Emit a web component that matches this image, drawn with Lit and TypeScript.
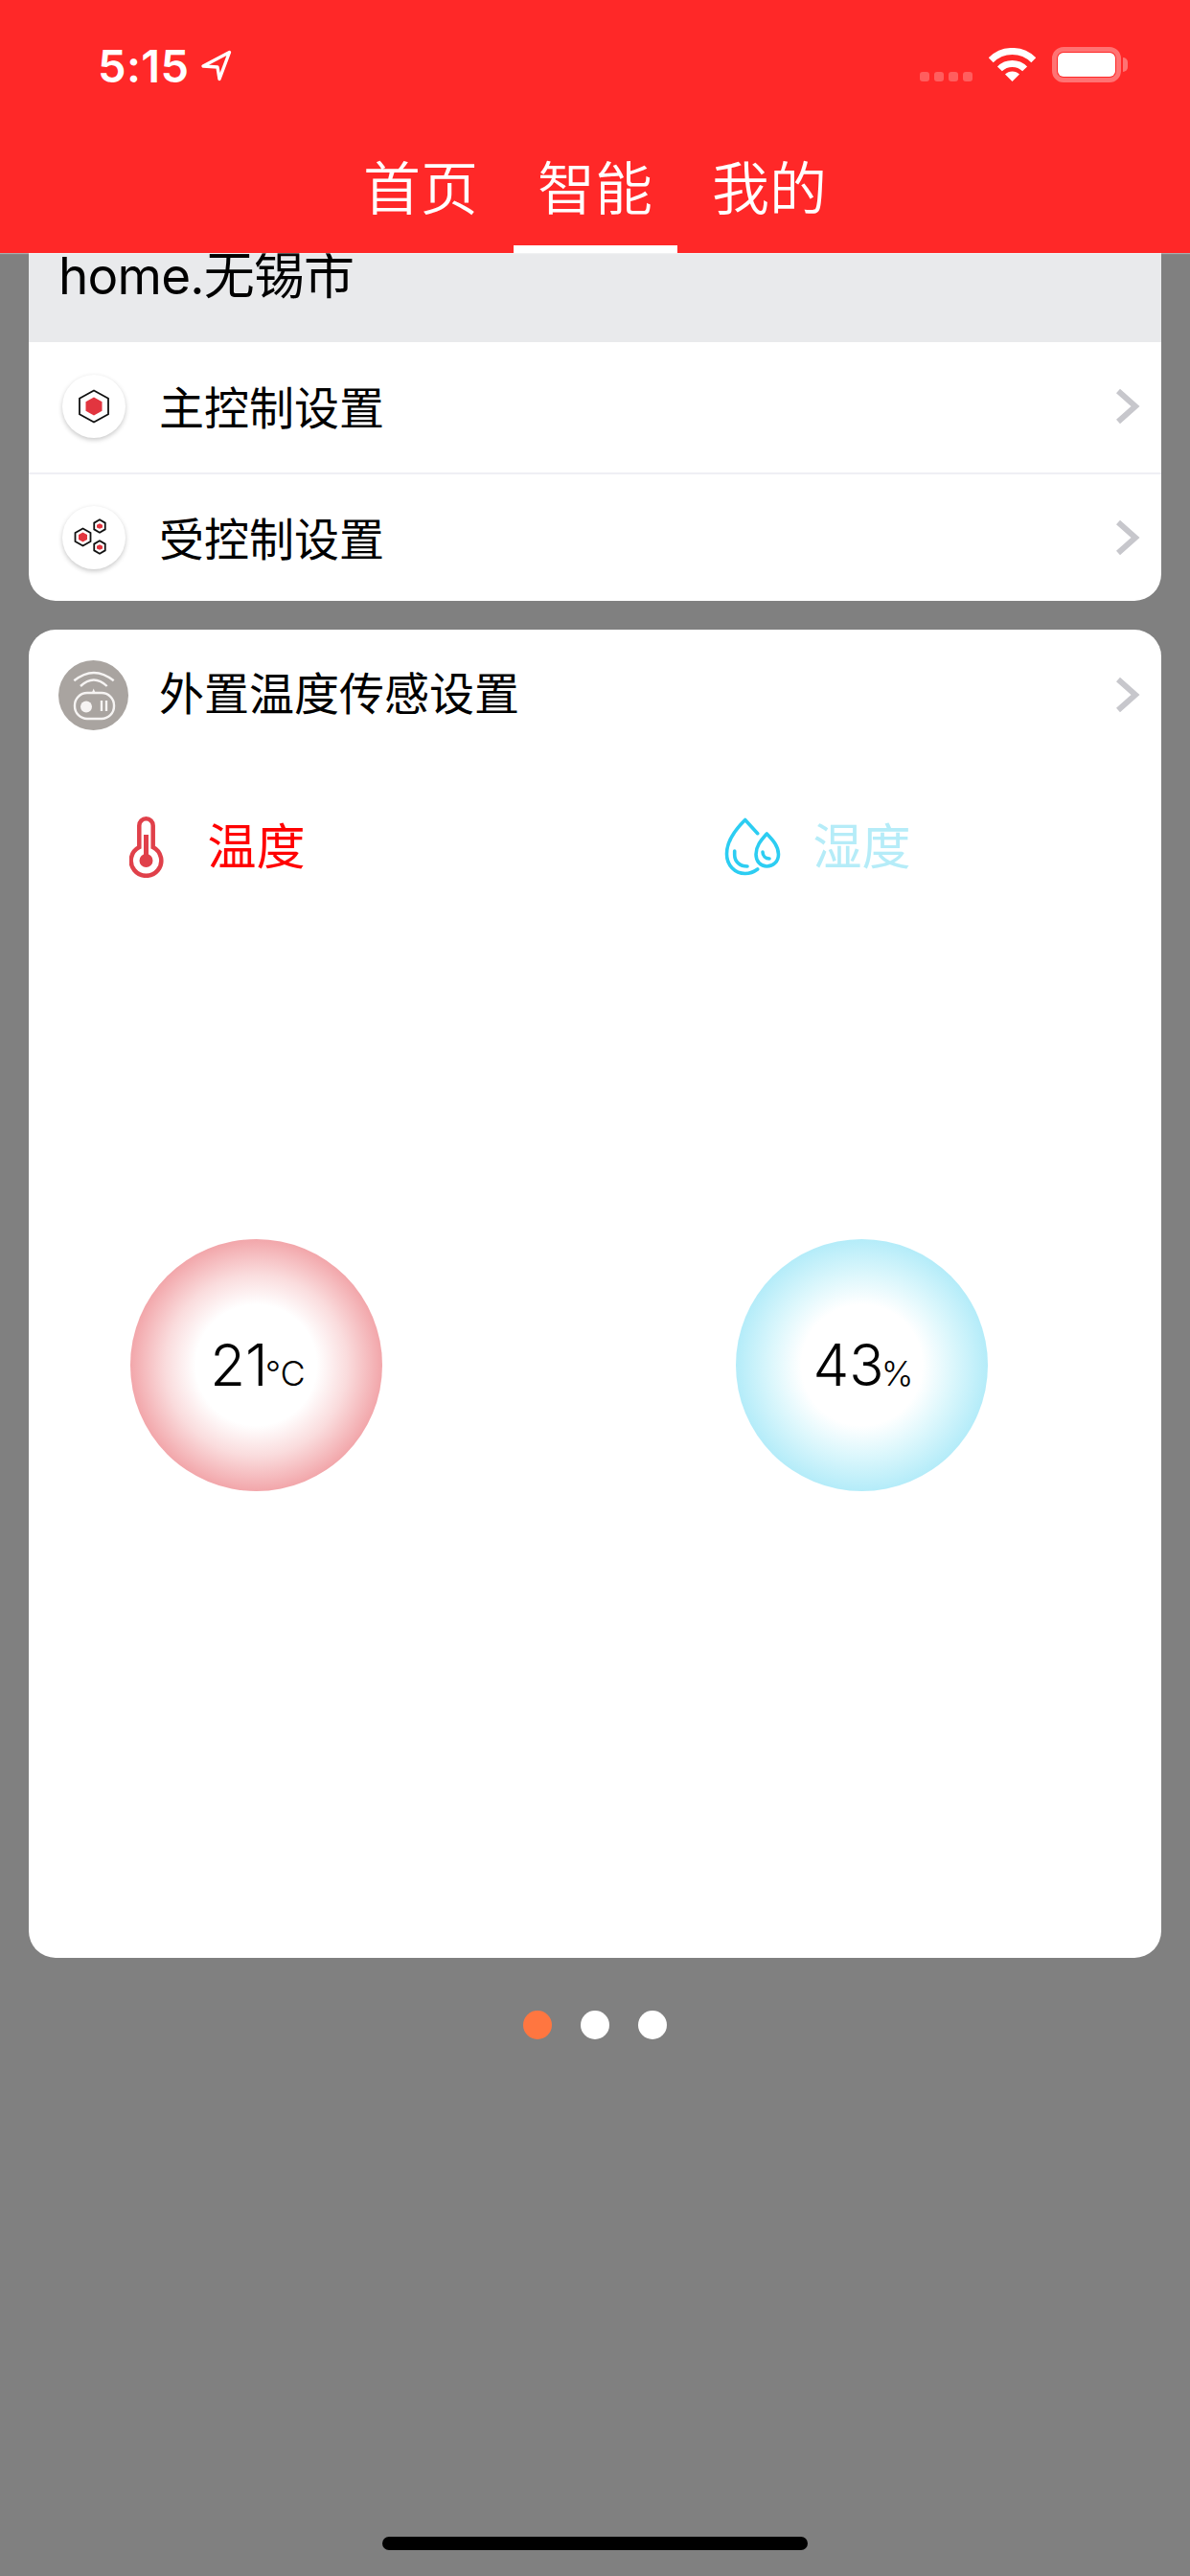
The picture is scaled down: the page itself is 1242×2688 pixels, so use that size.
import { LitElement, html, css, svg } from "lit";
import { customElement } from "lit/decorators.js";

const chevron = html`<svg class="chev" viewBox="0 0 26 38"><path d="M3 3 L21 19 L3 35" fill="none" stroke="#c7c7cc" stroke-width="6"/></svg>`;

const hex = (cx: number, cy: number, w: number, h: number) => {
  const a = w / 2, b = h / 2, q = h / 4;
  return `${cx},${cy - b} ${cx + a},${cy - q} ${cx + a},${cy + q} ${cx},${cy + b} ${cx - a},${cy + q} ${cx - a},${cy - q}`;
};

const hexPair = (cx: number, cy: number, w: number, h: number, iw: number, ih: number) => svg`
  <polygon points=${hex(cx, cy, w, h)} fill="#fff" stroke="#111" stroke-width="1.8"/>
  <polygon points=${hex(cx, cy, iw, ih)} fill="#e2353f"/>`;

const masterIcon = html`<span class="bubble"><svg viewBox="0 0 66 66" width="66" height="66">
  ${hexPair(33, 33, 30, 33, 17, 19)}</svg></span>`;
const slaveIcon = html`<span class="bubble"><svg viewBox="0 0 66 66" width="66" height="66">
  ${hexPair(21.5, 32.5, 16, 18, 9, 10)}${hexPair(39, 21, 11.5, 13.5, 6, 5.5)}${hexPair(39, 43, 11.5, 13.5, 6, 5.5)}</svg></span>`;

const remoteIcon = html`<svg class="remote" viewBox="0 0 73 73" width="73" height="73">
  <circle cx="36.5" cy="36.5" r="36.5" fill="#a9a4a0"/>
  <g fill="none" stroke="#f6f4f3" stroke-width="2.4">
    <path d="M16.3 21.3 Q36.9 4.5 57.7 21.3"/>
    <path d="M23 27 Q36.9 14 50.7 27"/>
    <rect x="17" y="34" width="41" height="27" rx="13"/>
    <path d="M50 42 V53 M45 42 V53"/>
  </g>
  <path d="M34.8 34 L36.7 29.5 L38.6 34Z" fill="#f6f4f3"/>
  <circle cx="29" cy="48.5" r="6" fill="#f6f4f3"/>
</svg>`;

const thermo = html`<svg class="lab-icon" viewBox="0 0 36 64" width="36" height="64">
  <path d="M10.3 32 V9.5 a7.2 7.2 0 0 1 14.4 0 V32 a15.8 15.8 0 1 1 -14.4 0 Z" fill="none" stroke="#e0404a" stroke-width="4.5"/>
  <rect x="15" y="19" width="5" height="24" fill="#e0404a"/>
  <circle cx="17.5" cy="46" r="7" fill="#e0404a"/>
</svg>`;

const drops = html`<svg class="lab-icon" viewBox="0 0 62 64" width="62" height="64">
  <g fill="none" stroke="#2ccdf2" stroke-width="3.6" stroke-linecap="round" stroke-linejoin="round">
    <path d="M35.7 17.7 L22.7 3.5 C12 14 3.5 26 3.5 39 C3.5 51 12 59.5 22.7 59.5 C27 59.5 31 58.5 35.7 55"/>
    <path d="M11.7 36 V40 C11.7 47 17 52 25 52"/>
    <path d="M45.3 18 C39 25 34 31 34 39.5 C34 47 39 52 45.3 52 C52 52 57.5 47 57.5 39.5 C57.5 31 52 25 45.3 18Z"/>
    <path d="M41 37 C41 41 44 44 48 44"/>
  </g>
</svg>`;

const wifi = html`<svg class="wifi" viewBox="0 0 49 35" width="49" height="35">
  <g fill="none" stroke="#fff" stroke-width="7">
    <path d="M2.2 12.7 A31.5 31.5 0 0 1 46.8 12.7"/>
    <path d="M11.4 21.9 A18.5 18.5 0 0 1 37.6 21.9"/>
  </g>
  <path d="M24.5 35 L17 27.5 A10.6 10.6 0 0 1 32 27.5Z" fill="#fff"/>
</svg>`;

const arrow = html`<svg class="arrow" viewBox="0 0 33 33" width="33" height="33">
  <path d="M30.5 2.5 L3 17 L18 18 L20 30.5 Z" fill="none" stroke="#fff" stroke-width="3.4" stroke-linejoin="round"/>
</svg>`;

@customElement("app-root")
export class AppRoot extends LitElement {
  static styles = css`
    :host {
      display: flex;
      flex-direction: column;
      height: 2688px;
      overflow: hidden;
      background: #808080;
      font-family: "Inter", "Noto Sans CJK SC", sans-serif;
      color: #000;
    }
    .header {
      position: relative;
      z-index: 2;
      height: 264px;
      flex: none;
      background: #ff2828;
      color: #fff;
      display: flex;
      flex-direction: column;
      box-shadow: 0 1px 1px rgba(255, 255, 255, 0.35);
    }
    .status {
      height: 136px;
      padding: 49px 72px 0 102px;
      box-sizing: border-box;
      display: flex;
      align-items: flex-start;
    }
    .time {
      font-size: 47px;
      line-height: 39px;
      font-weight: 600;
      letter-spacing: 0.4px;
      font-family: "Inter", sans-serif;
    }
    .arrow { margin: 3px 0 0 11px; }
    .spacer { flex: 1; }
    .signal { display: flex; gap: 5px; margin: 26px 17px 0 0; }
    .signal i { width: 10px; height: 10px; border-radius: 3px; background: rgba(255, 255, 255, 0.25); }
    .wifi { margin: 1px 17px 0 0; }
    .battery {
      position: relative;
      box-sizing: border-box;
      width: 72px;
      height: 37px;
      border: 5px solid rgba(255, 255, 255, 0.35);
      border-radius: 12px;
      padding: 1px;
    }
    .battery b { display: block; height: 100%; background: #fff; border-radius: 6px; }
    .battery::after {
      content: "";
      position: absolute;
      right: -12px;
      top: 6px;
      width: 5px;
      height: 15px;
      background: rgba(255, 255, 255, 0.35);
      border-radius: 0 8px 8px 0;
    }
    .tabs {
      flex: 1;
      display: flex;
      justify-content: center;
      gap: 11px;
    }
    .tab {
      width: 171px;
      box-sizing: border-box;
      text-align: center;
      font-size: 60px;
      line-height: 114px;
      font-family: "Noto Sans CJK SC", sans-serif;
      font-weight: 350;
    }
    .tab.on { border-bottom: 8px solid #fff; }
    .main {
      padding: 0 30px;
      display: flex;
      flex-direction: column;
      gap: 30px;
    }
    .card {
      background: #fff;
      border-radius: 28px;
      overflow: hidden;
    }
    .card.first { border-radius: 0 0 28px 28px; }
    .band {
      height: 93px;
      background: #e9eaec;
      padding-left: 31px;
      font-size: 53px;
      line-height: 48px;
      letter-spacing: -0.8px;
      font-family: "Inter", "Noto Sans CJK SC", sans-serif;
      font-weight: 400;
    }
    .row {
      height: 136px;
      display: flex;
      align-items: center;
      font-size: 47px;
      font-family: "Noto Sans CJK SC", sans-serif;
      font-weight: 400;
      padding: 0 22px 0 35px;
    }
    .row.line { border-bottom: 2px solid #efeff4; }
    .row.line .ic, .row.line .chev { margin-bottom: 3px; }
    .row.short { height: 132px; }
    .row .ic { width: 101px; flex: none; display: flex; }
    .row .ic.wide { margin-left: -4px; width: 105px; }
    .row .grow { flex: 1; padding-bottom: 6px; }
    .row.short .grow { padding-bottom: 3px; }
    .row .grow.up { padding-bottom: 10px; }
    .bubble {
      width: 66px;
      height: 66px;
      border-radius: 50%;
      background: #fff;
      box-shadow: 0 2px 5px rgba(0, 0, 0, 0.22);
      display: block;
    }
    .bubble svg { display: block; }
    .chev { width: 26px; height: 38px; display: block; }
    .sensors {
      height: 1250px;
      padding: 50px 0 0 106px;
      box-sizing: border-box;
      display: grid;
      grid-template-columns: 263px 263px;
      column-gap: 369px;
      grid-template-rows: 72px 1fr;
      row-gap: 378px;
    }
    .label {
      display: grid;
      grid-template-columns: minmax(0, 1fr) auto minmax(0, 1fr);
      align-items: center;
      font-size: 51px;
      font-family: "Noto Sans CJK SC", sans-serif;
      font-weight: 400;
    }
    .label .lab-icon { justify-self: end; margin-right: 45px; margin-top: 4px; }
    .label.hum .lab-icon { margin-right: 31px; }
    .label.temp { color: #ff0000; }
    .label.hum { color: #b5ecf8; }
    .label > span { text-align: center; padding-bottom: 4px; }
    .gauge {
      width: 263px;
      height: 263px;
      border-radius: 50%;
      display: flex;
      align-items: flex-start;
      justify-content: center;
      font-size: 60px;
      line-height: 1;
      font-weight: 350;
    }
    .gauge.t { background: radial-gradient(circle closest-side, #fff 0%, #fff 48%, #fadcdd 72%, #f2a6aa 100%); }
    .gauge.h { background: radial-gradient(circle closest-side, #fff 0%, #fff 48%, #dcf7fc 72%, #b4ecf9 100%); }
    .gauge small { font-size: 36px; margin-left: -3px; }
    .gauge span { display: flex; align-items: baseline; margin-top: 101px; padding-left: 3px; }
    .dots {
      display: flex;
      justify-content: center;
      gap: 30px;
      margin-top: 55px;
    }
    .dots i { width: 30px; height: 30px; border-radius: 50%; background: #fff; }
    .dots i.on { background: #ff7640; }
    .home {
      margin-top: auto;
      margin-bottom: 27px;
      align-self: center;
      width: 444px;
      height: 14px;
      border-radius: 7px;
      background: #000;
    }
  `;

  render() {
    return html`
      <div class="header">
        <div class="status">
          <span class="time">5:15</span>${arrow}
          <span class="spacer"></span>
          <span class="signal"><i></i><i></i><i></i><i></i></span>
          ${wifi}
          <span class="battery"><b></b></span>
        </div>
        <div class="tabs">
          <div class="tab">首页</div>
          <div class="tab on">智能</div>
          <div class="tab">我的</div>
        </div>
      </div>
      <div class="main">
        <div class="card first">
          <div class="band">home.无锡市</div>
          <div class="row line"><span class="ic">${masterIcon}</span><span class="grow">主控制设置</span>${chevron}</div>
          <div class="row short"><span class="ic">${slaveIcon}</span><span class="grow">受控制设置</span>${chevron}</div>
        </div>
        <div class="card">
          <div class="row"><span class="ic wide">${remoteIcon}</span><span class="grow up">外置温度传感设置</span>${chevron}</div>
          <div class="sensors">
            <div class="label temp">${thermo}<span>温度</span><i></i></div>
            <div class="label hum">${drops}<span>湿度</span><i></i></div>
            <div class="gauge t"><span>21<small>°C</small></span></div>
            <div class="gauge h"><span>43<small>%</small></span></div>
          </div>
        </div>
      </div>
      <div class="dots"><i class="on"></i><i></i><i></i></div>
      <div class="home"></div>
    `;
  }
}
